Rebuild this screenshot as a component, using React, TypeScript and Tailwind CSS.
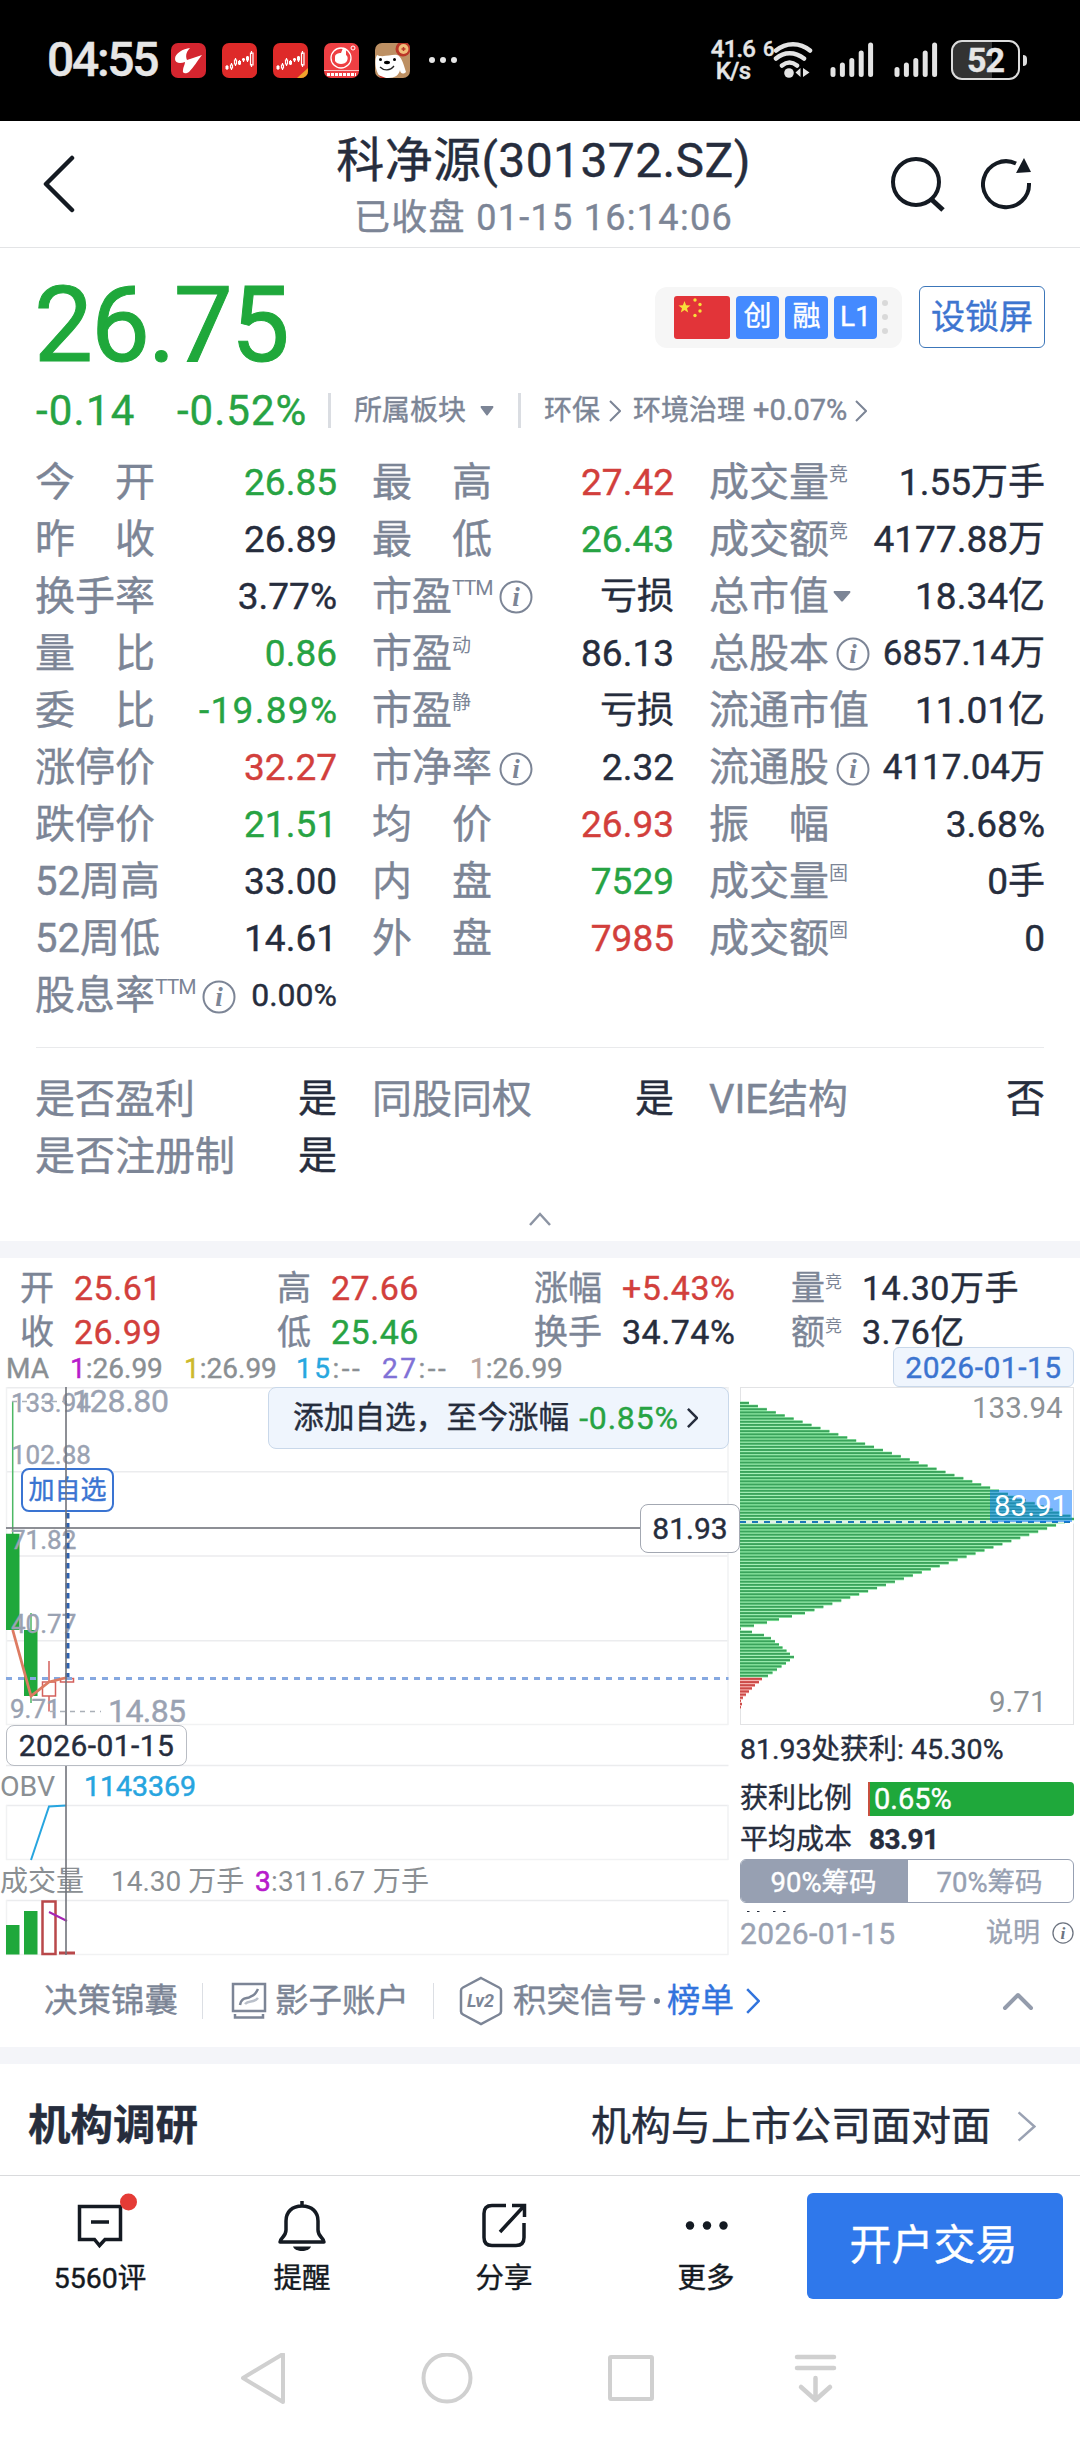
import type { ReactNode } from 'react';

type Tone = 'up' | 'down' | 'plain';

interface Quote {
  label: string;
  value: string;
  tone?: Tone;
  sup?: string;
  info?: boolean;
  caret?: boolean;
  valueClass?: string;
}

const toneClass: Record<Tone, string> = {
  up: 'text-[#d23f3c]',
  down: 'text-[#27a343]',
  plain: 'text-[#262d3d]',
};

const quoteColumns: Quote[][] = [
  [
    { label: '今　开', value: '26.85', tone: 'down' },
    { label: '昨　收', value: '26.89' },
    { label: '换手率', value: '3.77%' },
    { label: '量　比', value: '0.86', tone: 'down' },
    { label: '委　比', value: '-19.89%', tone: 'down', valueClass: 'text-[37px] tracking-[1.3px] -mr-[1.3px]' },
    { label: '涨停价', value: '32.27', tone: 'up' },
    { label: '跌停价', value: '21.51', tone: 'down' },
    { label: '52周高', value: '33.00' },
    { label: '52周低', value: '14.61' },
    { label: '股息率', value: '0.00%', sup: 'TTM', info: true, valueClass: 'text-[32px]' },
  ],
  [
    { label: '最　高', value: '27.42', tone: 'up' },
    { label: '最　低', value: '26.43', tone: 'down' },
    { label: '市盈', value: '亏损', sup: 'TTM', info: true },
    { label: '市盈', value: '86.13', sup: '动' },
    { label: '市盈', value: '亏损', sup: '静' },
    { label: '市净率', value: '2.32', info: true },
    { label: '均　价', value: '26.93', tone: 'up' },
    { label: '内　盘', value: '7529', tone: 'down' },
    { label: '外　盘', value: '7985', tone: 'up' },
  ],
  [
    { label: '成交量', value: '1.55万手', sup: '竞' },
    { label: '成交额', value: '4177.88万', sup: '竞' },
    { label: '总市值', value: '18.34亿', caret: true },
    { label: '总股本', value: '6857.14万', info: true, valueClass: 'text-[35px]' },
    { label: '流通市值', value: '11.01亿' },
    { label: '流通股', value: '4117.04万', info: true, valueClass: 'text-[35px]' },
    { label: '振　幅', value: '3.68%' },
    { label: '成交量', value: '0手', sup: '固' },
    { label: '成交额', value: '0', sup: '固' },
  ],
];

const flagColumns: Quote[][] = [
  [
    { label: '是否盈利', value: '是' },
    { label: '是否注册制', value: '是' },
  ],
  [{ label: '同股同权', value: '是' }],
  [{ label: 'VIE结构', value: '否' }],
];

const daySummary: { label: string; value: string; tone: Tone; sup?: string }[][] = [
  [
    { label: '开', value: '25.61', tone: 'up' },
    { label: '收', value: '26.99', tone: 'up' },
  ],
  [
    { label: '高', value: '27.66', tone: 'up' },
    { label: '低', value: '25.46', tone: 'down' },
  ],
  [
    { label: '涨幅', value: '+5.43%', tone: 'up' },
    { label: '换手', value: '34.74%', tone: 'plain' },
  ],
  [
    { label: '量', value: '14.30万手', tone: 'plain', sup: '竞' },
    { label: '额', value: '3.76亿', tone: 'plain', sup: '竞' },
  ],
];

const maItems = [
  { period: '1', value: '26.99', color: 'text-[#b71ccc]', box: 'w-[114px]' },
  { period: '1', value: '26.99', color: 'text-[#cdb92b]', box: 'w-[112px]' },
  { period: '15', value: '--', color: 'text-[#28a7df]', box: 'w-[86px] tracking-[2.5px]' },
  { period: '27', value: '--', color: 'text-[#8071d6]', box: 'w-[88px] tracking-[2.5px]' },
  { period: '1', value: '26.99', color: 'text-[#baa6a0]', box: '' },
];

// 筹码分布，每个价位一根横条
const chipBars: number[] = [
  ...Array.from({ length: 38 }, (_, i) => Math.min(334, 9 + i * 8.93)),
  ...Array.from({ length: 29 }, (_, i) => 325 - i * 8.95),
  65, 52, 39, 27, 14, 1, 12, 24, 31, 35, 39, 42.5, 46.5, 50, 54, 50, 46, 41.5, 37, 32.5, 28,
  22, 19, 15, 12, 9, 6, 3, 1, 2, 1,
];
const PROFIT_FROM = 88;
const CHIP_STEP = 3.136;

function InfoIcon({ className = 'size-[34px]', color = '#7c8596' }: { className?: string; color?: string }) {
  return (
    <svg viewBox="0 0 34 34" className={`shrink-0 ${className}`}>
      <circle cx="17" cy="17" r="15.5" fill="none" stroke={color} strokeWidth="2" />
      <text x="17" y="26" textAnchor="middle" fontSize="27" fontStyle="italic" fontWeight="700" fontFamily="'Liberation Serif', serif" fill={color}>
        i
      </text>
    </svg>
  );
}

function Chevron({ className, color, width = 2 }: { className: string; color: string; width?: number }) {
  return (
    <svg viewBox="0 0 12 22" preserveAspectRatio="none" className={`shrink-0 ${className}`} fill="none">
      <path d="M1 1l10 10L1 21" stroke={color} strokeWidth={width} vectorEffect="non-scaling-stroke" />
    </svg>
  );
}

function SignalBars() {
  return (
    <svg viewBox="0 0 44 36" className="h-9 w-11" stroke="#e4e4e4" strokeWidth="5" strokeLinecap="round">
      <path d="M3 27.500v5M12.400 23v9.500M21.800 18.500v14M31.200 11v21.500M40.600 3v29.500" />
    </svg>
  );
}

function StatusBar() {
  return (
    <div className="flex h-[121px] items-center bg-black pl-[47px] text-[#e6e6e6]">
      <span className="w-[124px] text-[48px] font-medium leading-none tracking-[-2.3px]">04:55</span>
      <div className="flex gap-4">
        <svg viewBox="0 0 35 35" className="size-[35px]">
          <rect width="35" height="35" rx="7" fill="#d4252f" />
          <path d="M4 16C4 10 12 6 19 5c-3 3-5 7-3 12l15-5c-5 6-8 12-13 17-3 2-7 2-6-2 0-3 2-5 2-8-5 2-10 1-10-3z" fill="#fff" />
        </svg>
        {[false, true].map((corner) => (
          <svg key={String(corner)} viewBox="0 0 35 35" className="size-[35px]">
            <rect width="35" height="35" rx="7" fill="#de2a29" />
            <path d="M24 35l11-10v3a7 7 0 01-7 7z" fill={corner ? '#f0a32c' : '#de2a29'} />
            <g fill="none" stroke="#fff" strokeWidth="1.200">
              <path d="M5 22v5M9.500 20v2M9.500 25v2M13.500 15v2M13.500 21v2M17.500 17v5M21.500 15v4M25.500 13v6M29.500 8v3M29.500 21v3" />
              <path d="M8.500 22h2v3h-2zM12.500 17h2v4h-2zM28.500 10h2.500v12h-2.500z" />
            </g>
            <path d="M3.500 23h3v3h-3zM16 18h3v3.500h-3zM20 15.500h3v2h-3zM24 13.500h3v4h-3z" fill="#fff" />
          </svg>
        ))}
        <svg viewBox="0 0 35 35" className="size-[35px]">
          <rect width="35" height="35" rx="7" fill="#ee3f43" />
          <rect y="27" width="35" height="1" fill="#fff" opacity=".7" />
          <circle cx="17" cy="15" r="10" fill="none" stroke="#fff" strokeWidth="1.300" />
          <path d="M11 14c0-3 3-4 6-4l2-5c2-1 3 1 3 3v4c2 1 2 4 1 6-2 4-10 4-12 0z" fill="#fff" />
          <circle cx="29" cy="5" r="2" fill="none" stroke="#fff" />
          <path d="M3 31.500h29" stroke="#fff" strokeWidth="3" strokeDasharray="3 1" />
        </svg>
        <svg viewBox="0 0 35 35" className="size-[35px]">
          <rect width="35" height="35" rx="7" fill="#bd9063" />
          <circle cx="28" cy="6" r="7.500" fill="#bb3728" />
          <circle cx="28.500" cy="6" r="5" fill="#f1bd79" />
          <path d="M26.500 6h4M28.500 4v4" stroke="#bb3728" strokeWidth="1.500" />
          <path d="M2 12c5 3 15-1 20 0 4 1 6 7 9 17-3 3-6 1-6-2-1 5-5 8-12 8H7C0 31-1 17 2 12z" fill="#fff" />
          <circle cx="5.500" cy="16.500" r="1.500" />
          <circle cx="19.500" cy="16.500" r="1.500" />
          <ellipse cx="12" cy="19.500" rx="3" ry="1.700" />
          <path d="M5 24c4 4 10 4 14-1" stroke="#222" strokeWidth="1.300" fill="none" />
          <path d="M3 32l8 3H6z" fill="#c02f22" />
        </svg>
      </div>
      <div className="ml-[19px] flex gap-[5px]">
        {[0, 1, 2].map((n) => (
          <i key={n} className="size-1.5 rounded-full bg-[#e6e6e6]" />
        ))}
      </div>
      <div className="ml-auto flex items-center pr-[53px]">
        <div className="w-[46px] text-center text-[24px] font-medium leading-[22px] tracking-[-0.8px]">
          41.6
          <br />
          K/s
        </div>
        <span className="ml-[7px] w-[10px] self-start text-[20px] font-medium leading-[22px]">6</span>
        <svg viewBox="0 0 40 38" className="h-[38px] w-10" fill="none" stroke="#e4e4e4" strokeWidth="4.500" strokeLinecap="round">
          <path d="M3 9.500c10-8.500 24-8.500 34 0M3 17.500c8-7 19-7 28 0M9 24.500c5-4 10-4 15 0" />
          <circle cx="16" cy="32" r="4.800" fill="#e4e4e4" stroke="none" />
          <path d="M27.500 27v9l-5-4.500zM30 27v9l6.500-4.500z" fill="#e4e4e4" stroke="none" />
        </svg>
        <div className="ml-[17px] flex gap-5">
          <SignalBars />
          <SignalBars />
        </div>
        <div className="ml-[13px] flex h-10 w-[69px] items-center justify-center rounded-[11px] border-[2.500px] border-[#dcdcdc] bg-linear-to-r from-[#333] from-60% to-black to-60% text-[34px] font-bold leading-none tracking-[-1px]">
          52
        </div>
        <i className="ml-[3px] h-[11px] w-1 rounded-r bg-[#dcdcdc]" />
      </div>
    </div>
  );
}

function Header() {
  return (
    <header className="flex h-[127px] items-center justify-between border-b border-[#e3e4e6] px-[43px]">
      <svg viewBox="0 0 34 58" className="h-[58px] w-[160px]" preserveAspectRatio="xMinYMid" fill="none" stroke="#141a22" strokeWidth="4.500" strokeLinecap="round" strokeLinejoin="round">
        <path d="M29 3L3 29l26 26" />
      </svg>
      <div className="pl-[7px] pt-[12px] text-center">
        <h1 className="h-[57px] text-[48px] leading-[54px] tracking-[0.4px] text-[#262d3d]">科净源(301372.SZ)</h1>
        <p className="text-[36px] leading-[54px] tracking-[1.3px] text-[#7c8596]">已收盘 01-15 16:14:06</p>
      </div>
      <div className="flex w-[160px] items-center justify-end gap-[35px] pr-1">
        <svg viewBox="0 0 56 56" className="size-14" fill="none" stroke="#141a22" strokeWidth="4">
          <circle cx="26" cy="26" r="23" />
          <path d="M41 43l12 11" strokeWidth="5" />
        </svg>
        <svg viewBox="0 0 52 56" className="h-14 w-[52px]" fill="none" stroke="#141a22" strokeWidth="4">
          <path d="M48 27A23 23 0 1135 7.500" />
          <path d="M43 2l7 14-15 1z" fill="#141a22" stroke="none" />
        </svg>
      </div>
    </header>
  );
}

function TagBox({ children }: { children: ReactNode }) {
  return (
    <span className="flex h-[43px] w-[43px] items-center justify-center rounded bg-[#448aff] text-[28px] leading-none text-white">
      {children}
    </span>
  );
}

function PriceBlock() {
  return (
    <section className="px-[36px]">
      <div className="flex h-[127px] items-center pt-3">
        <span className="-ml-0.5 pt-[16px] text-[105px] leading-none tracking-[-2px] text-[#1fa83b] [-webkit-text-stroke:1px]">26.75</span>
        <div className="ml-auto flex h-[61px] w-[247px] items-center gap-1.5 rounded-xl bg-[#f6f6f6] pl-[19px]">
          <svg viewBox="0 0 56 43" className="h-[43px] w-14" fill="#f8e03a">
            <rect width="56" height="43" rx="3" fill="#e23439" />
            <path d="M10.500 5l1.600 4.200 4.400.2-3.500 2.800 1.200 4.300-3.700-2.500-3.700 2.500L8 12.200 4.500 9.400l4.400-.2z" />
            <circle cx="21" cy="4" r="1.700" />
            <circle cx="26" cy="8.500" r="1.700" />
            <circle cx="26" cy="15" r="1.700" />
            <circle cx="21" cy="19.500" r="1.700" />
          </svg>
          <TagBox>创</TagBox>
          <TagBox>融</TagBox>
          <TagBox>L1</TagBox>
          <span className="-ml-px flex flex-col gap-2">
            <i className="size-1.5 rounded-full bg-[#d9d9d9]" />
            <i className="size-1.5 rounded-full bg-[#d9d9d9]" />
            <i className="size-1.5 rounded-full bg-[#d9d9d9]" />
          </span>
        </div>
        <button className="-mr-px ml-[17px] h-[62px] w-[126px] rounded-md border-[1.500px] border-[#3c76b9] text-[34px] leading-none text-[#3d75d0]">
          设锁屏
        </button>
      </div>
      <div className="flex h-[72px] items-center text-[28px] text-[#7c8596]">
        <span className="w-[141px] text-[42px] tracking-[1.2px] text-[#27a343]">-0.14</span>
        <span className="w-[151px] text-[42px] tracking-[1px] text-[#27a343]">-0.52%</span>
        <i className="h-[35px] w-[3px] bg-[#dadde2]" />
        <span className="ml-[23px]">所属板块</span>
        <svg viewBox="0 0 14 10" className="ml-3.5 h-2.5 w-3.5" fill="#7c8596">
          <path d="M1 0h12q1 1 0 2L7.800 9q-.8 1-1.600 0L1 2Q0 1 1 0z" />
        </svg>
        <i className="ml-[24px] h-[35px] w-[3px] bg-[#dadde2]" />
        <span className="ml-[23px]">环保</span>
        <Chevron className="ml-[9px] h-[22px] w-3" color="#7c8596" />
        <span className="ml-[12px]">环境治理</span>
        <span className="ml-[8px] text-[29px]">+0.07%</span>
        <Chevron className="ml-[8px] h-[22px] w-3" color="#7c8596" />
      </div>
    </section>
  );
}

function QuoteRow({ item, big }: { item: Quote; big?: boolean }) {
  const size = item.valueClass ?? (big ? 'text-[39px]' : 'text-[37px]');
  return (
    <div className="flex h-[57.060px] items-center">
      <span className="text-[40px] leading-[57px] text-[#7c8596]">{item.label}</span>
      {item.sup && (
        <span className={`mb-4 ${item.sup === 'TTM' ? 'text-[21px] tracking-[-1px]' : 'text-[19px]'} leading-none text-[#7c8596] [-webkit-text-stroke:0]`}>
          {item.sup}
        </span>
      )}
      {item.info && <InfoIcon className={item.sup ? 'ml-[6px] mt-0.5 size-[34px]' : 'ml-[7px] mt-0.5 size-[34px]'} />}
      {item.caret && (
        <svg viewBox="0 0 18 11" className="ml-1 h-[11px] w-[18px]" fill="#7c8596">
          <path d="M1 0h16q1 1 0 2l-7 8q-1 1-2 0L1 2Q0 1 1 0z" />
        </svg>
      )}
      <span className={`ml-auto whitespace-nowrap leading-[57px] ${size} ${toneClass[item.tone ?? 'plain']}`}>{item.value}</span>
    </div>
  );
}

function QuoteGrid({ columns, big }: { columns: Quote[][]; big?: boolean }) {
  return (
    <div className="-ml-px grid grid-cols-[302px_302px_336px] gap-x-[35px]">
      {columns.map((column, i) => (
        <div key={i}>
          {column.map((item, j) => (
            <QuoteRow key={j} item={item} big={big} />
          ))}
        </div>
      ))}
    </div>
  );
}

function KLineChart() {
  return (
    <div className="relative h-[569px] w-[740px]">
      <svg viewBox="0 1387 740 569" className="h-[569px] w-[740px]" fill="none">
        <g stroke="#ebecee" strokeWidth="1.500">
          <path d="M6 1387.700H728.500M6 1471.700H728.500M6 1556H728.500M6 1640.700H728.500M6 1765.500H728.500M6 1805.500H728.500M6 1900.500H728.500" />
          <path d="M6 1724.500H728.500M6 1859.500H728.500M6 1954.500H728.500M6.500 1387V1725M728 1387V1725M6.500 1805V1860M728 1805V1860M6.500 1900V1955M728 1900V1955" stroke="#f1f2f3" />
        </g>

        {/* K线 */}
        <path d="M12.700 1401V1534M31 1613V1703" stroke="#4db864" strokeWidth="1.500" />
        <path d="M6 1533.700h13.500V1630H6zM24 1630h13.500v66H24z" fill="#1fa83b" />
        <path d="M49 1661v21M49 1696v15.500M42.500 1682h13v14h-13zM60.500 1678.500h13v3.500h-13z" stroke="#d3605c" strokeWidth="1.500" />

        <g fill="#9aa2b2" stroke="#9aa2b2" strokeWidth=".4" fontSize="26">
          <text x="11" y="1411.500">133.94</text>
          <text x="11" y="1464">102.88</text>
          <text x="11" y="1549">71.82</text>
          <text x="11" y="1633">40.77</text>
          <text x="10" y="1718">9.71</text>
          <text x="72" y="1412" fontSize="32" textLength="97">128.80</text>
          <text x="108" y="1721.500" fontSize="32" textLength="78">14.85</text>
        </g>
        <path d="M12 1401.500H72M50 1711.500H101" stroke="#aab0b8" strokeWidth="1.500" strokeDasharray="5 5" />

        <path d="M6 1678.500H728.500" stroke="#86a8e0" strokeWidth="3" strokeDasharray="6 6" />
        <path d="M12.700 1630L31 1696l18-14 18-4.500" stroke="#dd7b62" strokeWidth="2.800" />

        {/* OBV */}
        <text x="0" y="1795.500" fontSize="28.500" fill="#8a8f93">OBV</text>
        <text x="84" y="1795.500" fontSize="28.500" fill="#27a5df" stroke="#27a5df" strokeWidth=".5">1143369</text>
        <path d="M31 1860l18-53.500 17-1" stroke="#27a5df" strokeWidth="2" />

        {/* 成交量 */}
        <g fontSize="28" fill="#8a8f93">
          <text x="0" y="1891">成交量</text>
          <text x="111" y="1891">14.30 万手</text>
          <text x="255" y="1891" textLength="174">
            <tspan fill="#b71ccc" stroke="#b71ccc" strokeWidth=".6">3</tspan>:311.67 万手
          </text>
        </g>
        <path d="M6 1925h13.500v29.500H6zM24 1911h13.500v43.500H24z" fill="#1fa83b" />
        <path d="M42.500 1901.500h13v52.500h-13z" stroke="#b9484a" strokeWidth="2.500" />
        <path d="M59 1953H75" stroke="#b9484a" strokeWidth="3" />
        <path d="M49 1912l18 9" stroke="#a524b5" strokeWidth="2" />
      </svg>

      {/* 加自选 */}
      <button className="absolute left-[21px] top-[81px] h-[44px] w-[93px] rounded-lg border-[2.500px] border-[#3a74d2] bg-white text-[26px] leading-none text-[#3a74d2]">
        加自选
      </button>
      <div className="absolute left-[268px] top-0 flex h-[62px] w-[461px] items-center rounded-lg border-[1.500px] border-[#c9d8ea] bg-[#eff5fd] pl-6 text-[30.700px] text-[#262d3d]">
        添加自选，至今涨幅
        <span className="ml-2.5 text-[32px] tracking-[0.8px] text-[#27a343]">-0.85%</span>
        <Chevron className="ml-2 h-5 w-[11px]" color="#262d3d" width={2.5} />
      </div>

      {/* 十字光标 */}
      <svg viewBox="0 1387 740 569" className="pointer-events-none absolute left-0 top-0 h-[569px] w-[740px]" fill="none">
        <path d="M67.500 1513V1677" stroke="#2e62b0" strokeWidth="4" strokeDasharray="5.500 4.500" />
        <path d="M66 1387V1955M6 1528H642" stroke="#70737b" strokeOpacity=".8" strokeWidth="2" />
      </svg>
      <div className="absolute left-[640px] top-[117px] flex h-[49px] w-[100px] items-center justify-center rounded-lg border-[1.500px] border-[#a3a8b2] bg-white text-[30px] text-[#262d3d]">
        81.93
      </div>
      <div className="absolute left-[6px] top-[338px] flex h-[41px] w-[181px] items-center justify-center rounded-lg border-[1.500px] border-[#b9bdc4] bg-white text-[30px] tracking-[0.4px] text-[#262d3d]">
        2026-01-15
      </div>
    </div>
  );
}

function ChipPanel() {
  return (
    <div className="w-[335px] text-[28px] text-[#262d3d]">
      <svg viewBox="740 1387 335 338" className="block h-[338px] w-[335px]">
        <rect x="740.500" y="1387.500" width="333" height="337" fill="none" stroke="#e2e3e5" />
        {chipBars.map((len, i) => (
          <g key={i}>
            <rect x="740" y={1401.5 + i * CHIP_STEP} width={len} height="3.200" fill={i < PROFIT_FROM ? '#90eba6' : '#f3a8a4'} />
            <rect x="740" y={1402 + i * CHIP_STEP} width={len} height="1.900" fill={i < PROFIT_FROM ? '#3aa35b' : '#cc4a48'} />
          </g>
        ))}
        <rect x="740" y="1520.500" width="334" height="3" fill="#fff" opacity=".85" />
        <path d="M740 1522H1072" stroke="#1b78b8" strokeWidth="2.200" strokeDasharray="6 6" />
        <rect x="990" y="1490" width="82" height="32" fill="#0a78ff" opacity=".52" />
        <g fontSize="29.500" fill="#8d9296">
          <text x="972" y="1417.700">133.94</text>
          <text x="989" y="1712">9.71</text>
          <text x="994" y="1515.700" fill="#fff">83.91</text>
        </g>
      </svg>
      <p className="h-[50px] whitespace-nowrap text-[28.500px] leading-[50px]">81.93处获利: 45.30%</p>
      <div className="flex h-[47px] items-center pt-px">
        <span className="w-[128px]">获利比例</span>
        <span className="mr-px h-[34px] flex-1 rounded-r border-l-2 border-[#c8503f] bg-[#1fa83b] pl-1 text-[29px] leading-[34px] text-white">0.65%</span>
      </div>
      <div className="flex h-[37px] items-center pb-0.5">
        <span className="w-[129px]">平均成本</span>
        <b className="text-[28px] tracking-[-0.6px]">83.91</b>
      </div>
      <div className="mr-px flex h-[44px] overflow-hidden rounded-md border-[1.500px] border-[#97a0b2] text-center text-[27.500px] leading-[45px]">
        <span className="w-[167px] bg-[#97a0b2] pr-0.5 text-white">90%筹码</span>
        <span className="flex-1 pr-0.5 text-[#97a0b2]">70%筹码</span>
      </div>
      <svg viewBox="0 0 60 12" className="block h-3 w-[60px]" stroke="#262d3d" strokeWidth="1.200">
        <path d="M7 8.500h2.500M17 8.500h2.500M33 8.500h2.500M43 8.500h2.500" />
      </svg>
      <div className="flex h-[36px] items-center text-[#9aa2b2]">
        <span className="text-[30px] tracking-[0.4px]">2026-01-15</span>
        <span className="ml-auto text-[27px]">说明</span>
        <InfoIcon className="ml-3 mr-px size-[22px]" color="#6d7480" />
      </div>
    </div>
  );
}

function ToolRow() {
  return (
    <div className="flex h-[91px] items-center pb-0.5 pl-[44px] pr-[46px] text-[33.500px] leading-none text-[#7c8596]">
      <span>决策锦囊</span>
      <i className="ml-[24px] h-9 w-px bg-[#dcdfe4]" />
      <svg viewBox="0 0 36 38" className="ml-[28px] h-[38px] w-9" fill="none" stroke="#7c8596" strokeWidth="2.500">
        <path d="M2 2h32v27H2zM4 32v3.500h28V32" />
        <path d="M9 23c1-8 7-6 10-8 4-2 5-2 8-8" />
        <path d="M14 22c4-5 8 0 13-6" stroke="#b9bfc9" />
      </svg>
      <span className="ml-2">影子账户</span>
      <i className="ml-[24px] h-9 w-px bg-[#dcdfe4]" />
      <svg viewBox="0 0 44 50" className="ml-[25px] h-[50px] w-11" fill="none">
        <path d="M22 2l18 9.500q2 1 2 3v21q0 2-2 3L22 48 4 38.500q-2-1-2-3v-21q0-2 2-3z" stroke="#7c8596" strokeWidth="2.500" />
        <text x="21.500" y="31" textAnchor="middle" fontSize="18" fontStyle="italic" fontWeight="700" fill="#7c8596">
          Lv2
        </text>
      </svg>
      <span className="ml-2.5">积突信号</span>
      <i className="mx-[7px] size-1.5 rounded-full bg-[#7c8596]" />
      <span className="text-[#3274dd]">榜单</span>
      <Chevron className="ml-3 h-[26px] w-[14px]" color="#3274dd" width={2.5} />
      <svg viewBox="0 0 32 20" className="ml-auto h-5 w-8" fill="none" stroke="#949cac" strokeWidth="4" strokeLinecap="round" strokeLinejoin="round">
        <path d="M3 17L16 4l13 13" />
      </svg>
    </div>
  );
}

function BottomItem({ label, children }: { label: string; children: ReactNode }) {
  return (
    <div className="flex w-[202px] flex-col items-center pt-[20px]">
      <svg viewBox="0 0 60 60" className="size-[60px] overflow-visible" fill="none" stroke="#141a22" strokeWidth="3.500">
        {children}
      </svg>
      <span className="mt-[5px] text-[28.500px] leading-[36px] text-[#141a22]">{label}</span>
    </div>
  );
}

function BottomBar() {
  return (
    <div className="flex h-[147px] border-t border-[#d9dadc]">
      <div className="-ml-px flex w-[808px]">
        <BottomItem label="5560评">
          <path d="M9.500 10.500h41v33H35l-5.500 6-5-6h-15zM21 26h18" />
          <circle cx="58.500" cy="6" r="8.500" fill="#e53b36" stroke="none" />
        </BottomItem>
        <BottomItem label="提醒">
          <path d="M30 5v5M8 46h44c0-4-6-5-6-12v-9c0-9-6-15-16-15s-16 6-16 15v9c0 7-6 8-6 12z" strokeLinejoin="round" />
          <path d="M21 50.500h18c-2 6-16 6-18 0z" fill="#141a22" stroke="none" />
        </BottomItem>
        <BottomItem label="分享">
          <path d="M32 9.500H18q-8 0-8 8v24q0 8 8 8h24q8 0 8-8V27M26 36l24-26M38 9.500h12.500V21" />
        </BottomItem>
        <BottomItem label="更多">
          <g fill="#141a22" stroke="none">
            <circle cx="14" cy="29.500" r="4.200" />
            <circle cx="31" cy="29.500" r="4.200" />
            <circle cx="47.500" cy="29.500" r="4.200" />
          </g>
        </BottomItem>
      </div>
      <button className="mt-[17px] h-[106px] w-[256px] rounded-md bg-[#2f78eb] pr-[3px] text-[42px] leading-none text-white">开户交易</button>
    </div>
  );
}

function SystemNav() {
  return (
    <nav className="flex h-[118px] items-center pl-[238px]">
      <svg viewBox="0 0 600 56" className="h-14 w-[600px]" fill="none" stroke="#d0d0d0" strokeWidth="4" strokeLinejoin="round" strokeLinecap="round">
        <path d="M45 1v48L5 25z" />
        <circle cx="209" cy="25" r="23.500" />
        <rect x="372" y="4" width="42" height="42" rx="1" />
        <path d="M559 4h37M559 15h37M577.500 25v21M563 34l14.500 13L592 34" strokeWidth="4.500" />
      </svg>
    </nav>
  );
}

export default function App() {
  return (
    <div className="flex h-[2440px] w-[1080px] flex-col overflow-hidden bg-white font-['Roboto','Noto_Sans_CJK_SC',sans-serif] [-webkit-text-stroke:0.4px]">
      <StatusBar />
      <Header />
      <PriceBlock />

      <section className="px-[36px] pt-[7px]">
        <QuoteGrid columns={quoteColumns} />
        <div className="mt-[23px] border-t border-[#e9eaec] pt-[23px]">
          <QuoteGrid columns={flagColumns} big />
        </div>
        <div className="flex h-[56px] items-center justify-center">
          <svg viewBox="0 0 22 14" className="mt-3 h-3.5 w-[22px]" fill="none" stroke="#8c94a3" strokeWidth="2.500">
            <path d="M1 13L11 2l10 11" />
          </svg>
        </div>
      </section>
      <div className="h-[17px] shrink-0 bg-[#f4f5f9]" />

      <section className="relative h-[129px] shrink-0 pt-[8px]">
        <div className="grid grid-cols-[257px_257px_257px_1fr] pl-[20px] text-[34px]">
          {daySummary.map((column, i) => (
            <div key={i}>
              {column.map((item) => (
                <div key={item.label} className="flex h-11 items-center">
                  <span className="text-[#7c8596]">{item.label}</span>
                  {item.sup && (
                    <span className="mb-3 w-[17px] text-[17px] leading-none text-[#7c8596] [-webkit-text-stroke:0]">{item.sup}</span>
                  )}
                  <span className={`ml-[20px] whitespace-nowrap tracking-[0.5px] ${toneClass[item.tone]}`}>{item.value}</span>
                </div>
              ))}
            </div>
          ))}
        </div>
        <div className="flex h-[30px] items-center pl-[6px] text-[28px] text-[#8a8f93]">
          <span className="w-[64px]">MA</span>
          {maItems.map((ma, i) => (
            <span key={i} className={ma.box}>
              <span className={ma.color}>{ma.period}</span>:{ma.value}
            </span>
          ))}
        </div>
        <div className="absolute right-[6px] top-[89px] flex h-[40px] w-[181px] items-center justify-center rounded-md border-[1.500px] border-[#c9d8ea] bg-[#eff5fd] text-[30px] tracking-[0.5px] text-[#3b74d0]">
          2026-01-15
        </div>
      </section>

      <div className="flex h-[569px] shrink-0">
        <KLineChart />
        <ChipPanel />
      </div>
      <ToolRow />
      <div className="h-[17px] shrink-0 bg-[#f4f5f9]" />

      <div className="flex h-[111px] items-center pl-[28px] pr-[44px] pt-[14px] text-[#262d3d]">
        <h2 className="text-[42.500px] font-bold leading-none">机构调研</h2>
        <span className="ml-auto text-[40px] leading-none">机构与上市公司面对面</span>
        <Chevron className="ml-[26px] h-[31px] w-[19px]" color="#9aa2b3" width={2.5} />
      </div>
      <BottomBar />
      <SystemNav />
    </div>
  );
}
